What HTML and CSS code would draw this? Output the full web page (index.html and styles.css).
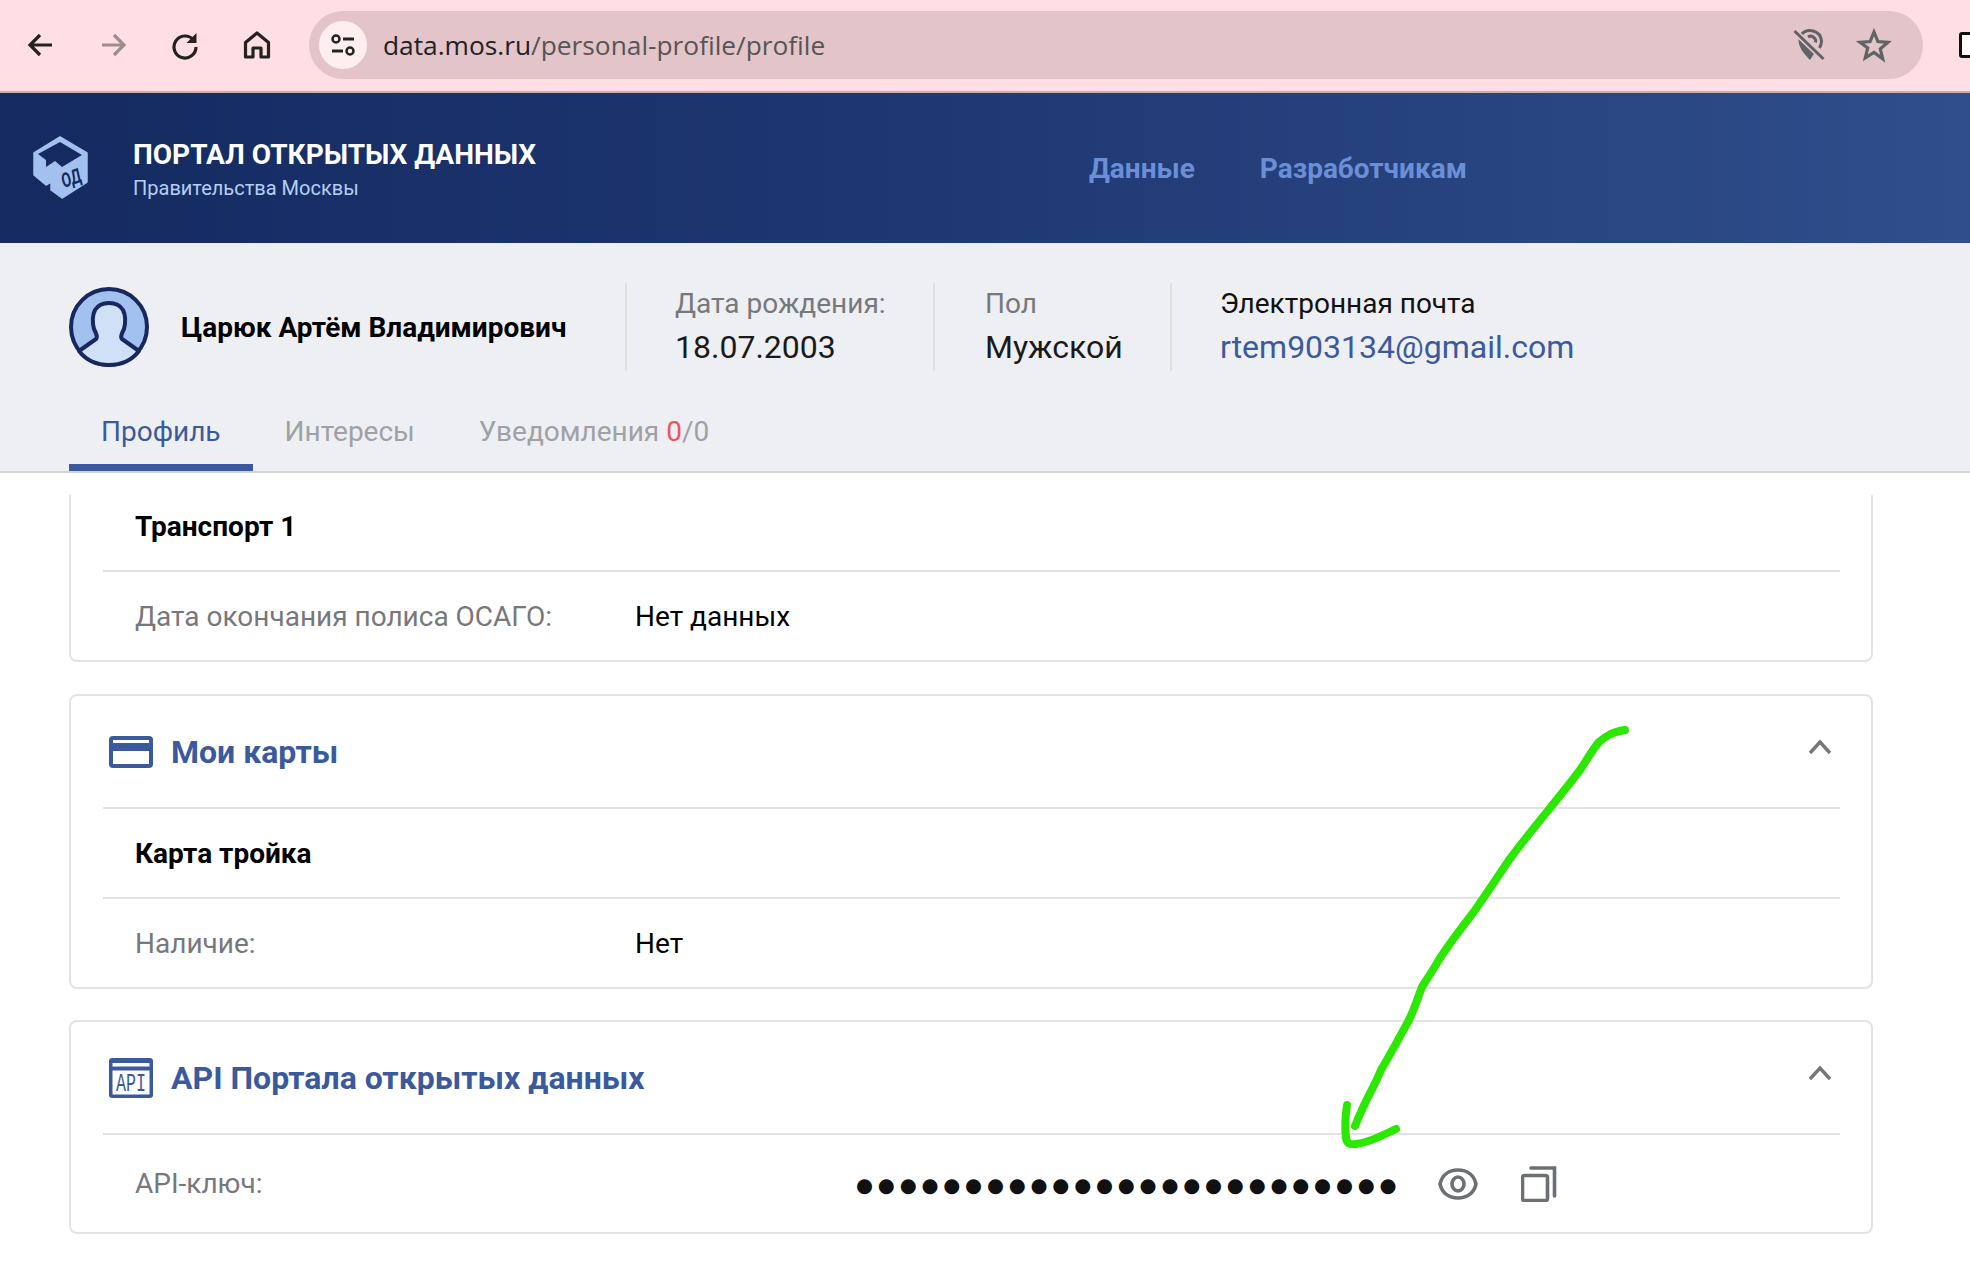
FILE: index.html
```html
<!DOCTYPE html>
<html lang="ru">
<head>
    <meta charset="UTF-8">
    <title>Портал открытых данных</title>
    <link rel="stylesheet" href="styles.css">
</head>
<body>
<div class="page">
    <div class="toolbar">
        <svg class="tool" width="30" height="30" viewBox="0 0 30 30"><path d="M26 15H5M14 5L4 15l10 10" fill="none" stroke="#222" stroke-width="3.2"/></svg>
        <svg class="tool" width="30" height="30" viewBox="0 0 30 30"><path d="M4 15h21M16 5l10 10-10 10" fill="none" stroke="#a08c90" stroke-width="3.2"/></svg>
        <svg class="tool" width="30" height="30" viewBox="0 0 30 30"><path d="M23.5 10A11 11 0 1 0 26 17" fill="none" stroke="#222" stroke-width="3.2"/><path d="M26.5 3v10h-10z" fill="#222"/></svg>
        <svg class="tool" width="30" height="30" viewBox="0 0 30 30"><path d="M15 3L3.500 12.500V27h7.500v-9h8v9h7.500V12.500z" fill="none" stroke="#222" stroke-width="3.200" stroke-linejoin="round"/></svg>
        <div class="omnibox">
            <span class="chip">
                <svg width="28" height="28" viewBox="0 0 28 28"><circle cx="7" cy="8" r="3.500" fill="none" stroke="#222" stroke-width="2.500"/><path d="M14 8h11M3 20h11" stroke="#222" stroke-width="2.800"/><circle cx="21" cy="20" r="3.500" fill="none" stroke="#222" stroke-width="2.500"/></svg>
            </span>
            <span class="url"><b>data.mos.ru</b>/personal-profile/profile</span>
            <svg class="omni-icon" width="36" height="36" viewBox="0 0 36 36"><path d="M10 8A11.500 11.500 0 0 1 30.500 14c0 3-.8 5-2 7" fill="none" stroke="#5f6368" stroke-width="3"/><path d="M7.500 12C7 20 13 27 19 33l4.500-7z" fill="#5f6368"/><path d="M17 10a5 5 0 0 1 7.500 5.500" fill="none" stroke="#5f6368" stroke-width="3"/><path d="M3.500 4l29 28" stroke="#e3c5c9" stroke-width="6"/><path d="M3.500 4l29 28" stroke="#5f6368" stroke-width="3"/></svg>
            <svg class="omni-icon" width="36" height="36" viewBox="0 0 36 36"><path d="M18 5l3.900 9.500 10.100.8-7.700 6.600 2.400 9.900L18 25.500 9.300 30.800l2.400-9.900L4 15.300l10.100-.8z" fill="none" stroke="#5f6368" stroke-width="3.200" stroke-linejoin="miter"/></svg>
        </div>
        <span class="tab-edge"></span>
    </div>

    <header class="site-header">
        <svg class="logo" width="55" height="63" viewBox="0 0 55 63">
            <path d="M27 0L54 16v29L29 61 18 53v-8l-5 3L1 38V16z" fill="#a3c1ee" stroke="#a3c1ee" stroke-width="1.500" stroke-linejoin="round"/>
            <path d="M5 17L27 5l22 13-20 12-7-6-9 6v-7z" fill="#142a60"/>
            <text class="logo-text" x="31" y="51" textLength="20" lengthAdjust="spacingAndGlyphs" transform="rotate(-20 31 51)">ОД</text>
        </svg>
        <div class="brand">
            <div class="brand-title">ПОРТАЛ ОТКРЫТЫХ ДАННЫХ</div>
            <div class="brand-sub">Правительства Москвы</div>
        </div>
        <nav class="main-nav">
            <a>Данные</a>
            <a>Разработчикам</a>
        </nav>
    </header>

    <section class="profile">
        <div class="profile-info">
            <svg class="avatar" width="80" height="80" viewBox="0 0 80 80">
                <circle cx="40" cy="40" r="38" fill="#a3c1ee" stroke="#16285f" stroke-width="4"/>
                <path d="M10 64l17-12c2-2 0-6-2-10-2-8-2-13 1-19 3-5 8-7 14-7s11 2 14 7c3 6 3 11 1 19-2 4-4 8-2 10l17 12c-7 9-18 14-30 14s-23-5-30-14z" fill="#d0e0f7" stroke="#16285f" stroke-width="4" stroke-linejoin="round"/>
            </svg>
            <div class="person-name">Царюк Артём Владимирович</div>
            <div class="fact fact-birth">
                <div class="fact-label">Дата рождения:</div>
                <div class="fact-value">18.07.2003</div>
            </div>
            <div class="fact fact-sex">
                <div class="fact-label">Пол</div>
                <div class="fact-value">Мужской</div>
            </div>
            <div class="fact fact-mail">
                <div class="fact-label dark">Электронная почта</div>
                <div class="fact-value link">rtem903134@gmail.com</div>
            </div>
        </div>
        <ul class="tabs">
            <li class="selected">Профиль</li>
            <li>Интересы</li>
            <li>Уведомления <span class="red">0</span>/0</li>
        </ul>
    </section>

    <main class="content">
        <div class="card card-cut">
            <div class="row row-title">Транспорт 1</div>
            <div class="row row-data">
                <span class="row-label">Дата окончания полиса ОСАГО:</span>
                <span>Нет данных</span>
            </div>
        </div>

        <div class="card">
            <div class="card-head">
                <svg class="card-icon" width="44" height="32" viewBox="0 0 44 32"><rect x="2" y="2" width="40" height="28" rx="2" fill="none" stroke="#3b5a9e" stroke-width="4"/><rect x="2" y="7" width="40" height="8" fill="#3b5a9e"/></svg>
                <h2>Мои карты</h2>
                <svg class="chevron" width="24" height="16" viewBox="0 0 24 16"><path d="M2 14L12 3l10 11" fill="none" stroke="#777" stroke-width="3.400"/></svg>
            </div>
            <div class="row row-title">Карта тройка</div>
            <div class="row row-data">
                <span class="row-label">Наличие:</span>
                <span>Нет</span>
            </div>
        </div>

        <div class="card">
            <div class="card-head">
                <svg class="card-icon" width="44" height="40" viewBox="0 0 44 40"><rect x="1.750" y="1.750" width="40.500" height="36.500" rx="1.500" fill="none" stroke="#3b5a9e" stroke-width="3.500"/><rect x="1" y="1" width="42" height="4" fill="#3b5a9e"/><rect x="1" y="8.500" width="42" height="4" fill="#3b5a9e"/><text class="api-text" x="7" y="33" textLength="30" lengthAdjust="spacingAndGlyphs">API</text></svg>
                <h2>API Портала открытых данных</h2>
                <svg class="chevron" width="24" height="16" viewBox="0 0 24 16"><path d="M2 14L12 3l10 11" fill="none" stroke="#777" stroke-width="3.400"/></svg>
            </div>
            <div class="row row-key">
                <span class="row-label">API-ключ:</span>
                <span class="key-dots">●●●●●●●●●●●●●●●●●●●●●●●●●</span>
                <svg class="eye" width="40" height="32" viewBox="0 0 40 32"><path d="M2 16C4 7 11 2 20 2s16 5 18 14c-2 9-9 14-18 14S4 25 2 16z" fill="none" stroke="#6c7075" stroke-width="3.600"/><ellipse cx="20" cy="16" rx="6" ry="7" fill="none" stroke="#6c7075" stroke-width="3.600"/></svg>
                <svg class="copy" width="36" height="36" viewBox="0 0 36 36"><rect x="1.500" y="9.500" width="25" height="25" rx="2" fill="none" stroke="#6c7075" stroke-width="3.600"/><path d="M10 2h23.500v28" fill="none" stroke="#6c7075" stroke-width="3.600" stroke-linecap="round"/></svg>
            </div>
        </div>
    </main>

    <svg class="scribble" width="1970" height="1262" viewBox="0 0 1970 1262">
        <path d="M1625 730C1612 732 1606 736 1599 742C1592 750 1587 760 1580 770C1560 797 1535 825 1509 860C1497 878 1485 896 1473 913C1460 930 1448 945 1437 963C1430 975 1426 980 1422 987C1417 1000 1414 1010 1409 1020C1398 1040 1390 1055 1381 1070C1375 1085 1366 1100 1361 1112C1358 1118 1357 1122 1355 1126" fill="none" stroke="#2ce800" stroke-width="8" stroke-linecap="round"/>
        <path d="M1347 1105C1345 1118 1345 1130 1346 1138C1347 1144 1351 1145 1356 1144C1366 1143 1375 1139 1396 1129" fill="none" stroke="#2ce800" stroke-width="8" stroke-linecap="round"/>
    </svg>
</div>
</body>
</html>
```
FILE: styles.css
```css
*{
    margin: 0;
    padding: 0;
    box-sizing: border-box;
}
ul{
    list-style: none;
}
body{
    font-family: Roboto, "Noto Sans", sans-serif;
    background: #fff;
    color: #000;
}
.page{
    width: 1970px;
    height: 1262px;
    overflow: hidden;
    position: relative;
}

/* browser bar */
.toolbar{
    height: 93px;
    background: #ffdfe3;
    border-bottom: 2px solid #c9aeb2;
    display: flex;
    align-items: center;
    padding: 0 0 2px 26px;
}
.tool{
    margin-right: 42px;
    flex: none;
}
.omnibox{
    flex: none;
    width: 1614px;
    height: 68px;
    margin-left: -5px;
    background: #e3c5c9;
    border-radius: 34px;
    display: flex;
    align-items: center;
    padding: 0 31px 0 10px;
}
.chip{
    width: 48px;
    height: 48px;
    border-radius: 50%;
    background: #ffeef0;
    display: flex;
    align-items: center;
    justify-content: center;
    flex: none;
}
.url{
    font-family: "Open Sans", sans-serif;
    font-size: 26.3px;
    color: #555;
    margin-left: 16px;
    flex: 1;
}
.url b{
    font-weight: 400;
    color: #202124;
}
.omni-icon{
    margin-left: 29px;
    flex: none;
}
.tab-edge{
    flex: none;
    width: 30px;
    height: 26px;
    margin-left: 36px;
    border: 3px solid #111;
    border-radius: 3px;
    background: #fff;
}

/* site header */
.site-header{
    height: 150px;
    background: linear-gradient(90deg, #142a60 0%, #1d3570 40%, #2f4e8b 100%);
    display: flex;
    align-items: center;
    padding-left: 33px;
}
.logo{
    flex: none;
    overflow: visible;
}
.logo-text{
    font-family: Roboto, sans-serif;
    font-size: 20px;
    font-weight: 700;
    font-style: italic;
    fill: #142a60;
}
.brand{
    margin-left: 45px;
    width: 956px;
    padding-top: 5px;
}
.brand-title{
    font-size: 28px;
    font-weight: 700;
    color: #fff;
    line-height: 36px;
}
.brand-sub{
    font-size: 20px;
    color: #b5d0f5;
    line-height: 31px;
}
.main-nav{
    display: flex;
    gap: 65px;
}
.main-nav a{
    font-size: 28px;
    font-weight: 700;
    color: #6b8fd6;
}

/* profile */
.profile{
    height: 230px;
    background: #eeeff3;
    border-bottom: 2px solid #d2d3d8;
    padding: 40px 0 0 69px;
}
.profile-info{
    display: flex;
    align-items: center;
    height: 88px;
}
.avatar{
    flex: none;
}
.person-name{
    font-size: 28px;
    font-weight: 700;
    margin-left: 32px;
    width: 446px;
    height: 88px;
    line-height: 90px;
    border-right: 2px solid #dfdfdc;
}
.fact{
    height: 88px;
    padding-left: 48px;
    border-right: 2px solid #dfdfdc;
}
.fact-birth{
    width: 308px;
}
.fact-sex{
    width: 237px;
    padding-left: 50px;
}
.fact-mail{
    border-right: 0;
    padding-left: 48px;
}
.fact-label{
    font-size: 28px;
    line-height: 41px;
    color: #77787c;
}
.fact-label.dark{
    color: #111;
}
.fact-value{
    font-size: 32px;
    line-height: 44px;
    padding-top: 1px;
    color: #1a1a1a;
}
.fact-value.link{
    color: #3b5a9e;
}
.tabs{
    display: flex;
    margin-top: 31px;
    font-size: 28px;
    color: #a0a1a5;
}
.tabs li{
    height: 69px;
    line-height: 59px;
    padding: 0 32px;
}
.tabs li.selected{
    color: #3b5a9e;
    border-bottom: 7px solid #3b5a9e;
}
.red{
    color: #f0535a;
}

/* cards */
.content{
    padding: 22px 0 0 69px;
}
.card{
    width: 1804px;
    margin-bottom: 31px;
    border: 2px solid #e6e3df;
    border-radius: 8px;
    padding: 0 31px 0 32px;
    background: #fff;
}
.card-cut{
    border-top: 0;
    border-top-left-radius: 0;
    border-top-right-radius: 0;
    margin-bottom: 32px;
}
.card-head{
    height: 113px;
    display: flex;
    align-items: center;
    padding: 0 8px 0 6px;
    border-bottom: 2px solid #e1e1e8;
}
.card-head h2{
    font-size: 32px;
    font-weight: 700;
    color: #3b5a9e;
    margin-left: 18px;
    flex: 1;
}
.card-icon{
    flex: none;
    overflow: visible;
}
.chevron{
    flex: none;
    margin-bottom: 10px;
}
.api-text{
    font-family: "Liberation Mono", monospace;
    font-size: 25px;
    fill: #3b5a9e;
}
.row{
    padding-left: 32px;
    display: flex;
    align-items: center;
    font-size: 28px;
}
.row-title{
    height: 90px;
    font-weight: 700;
    border-bottom: 2px solid #e1e1e8;
}
.card-cut .row-title{
    height: 77px;
    padding-bottom: 13px;
}
.row-data{
    height: 88px;
}
.row-label{
    width: 500px;
    color: #77787c;
    flex: none;
}
.row-key{
    height: 97px;
}
.key-dots{
    font-family: "DejaVu Sans", sans-serif;
    font-size: 19.5px;
    letter-spacing: 4.8px;
    color: #111;
    margin-left: 221px;
    width: 543px;
    flex: none;
    white-space: nowrap;
    padding-top: 4px;
}
.eye{
    margin-left: 39px;
    flex: none;
}
.copy{
    margin-left: 43px;
    flex: none;
}

/* hand drawn arrow on top of the screenshot */
.scribble{
    position: absolute;
    left: 0;
    top: 0;
    pointer-events: none;
}
```
